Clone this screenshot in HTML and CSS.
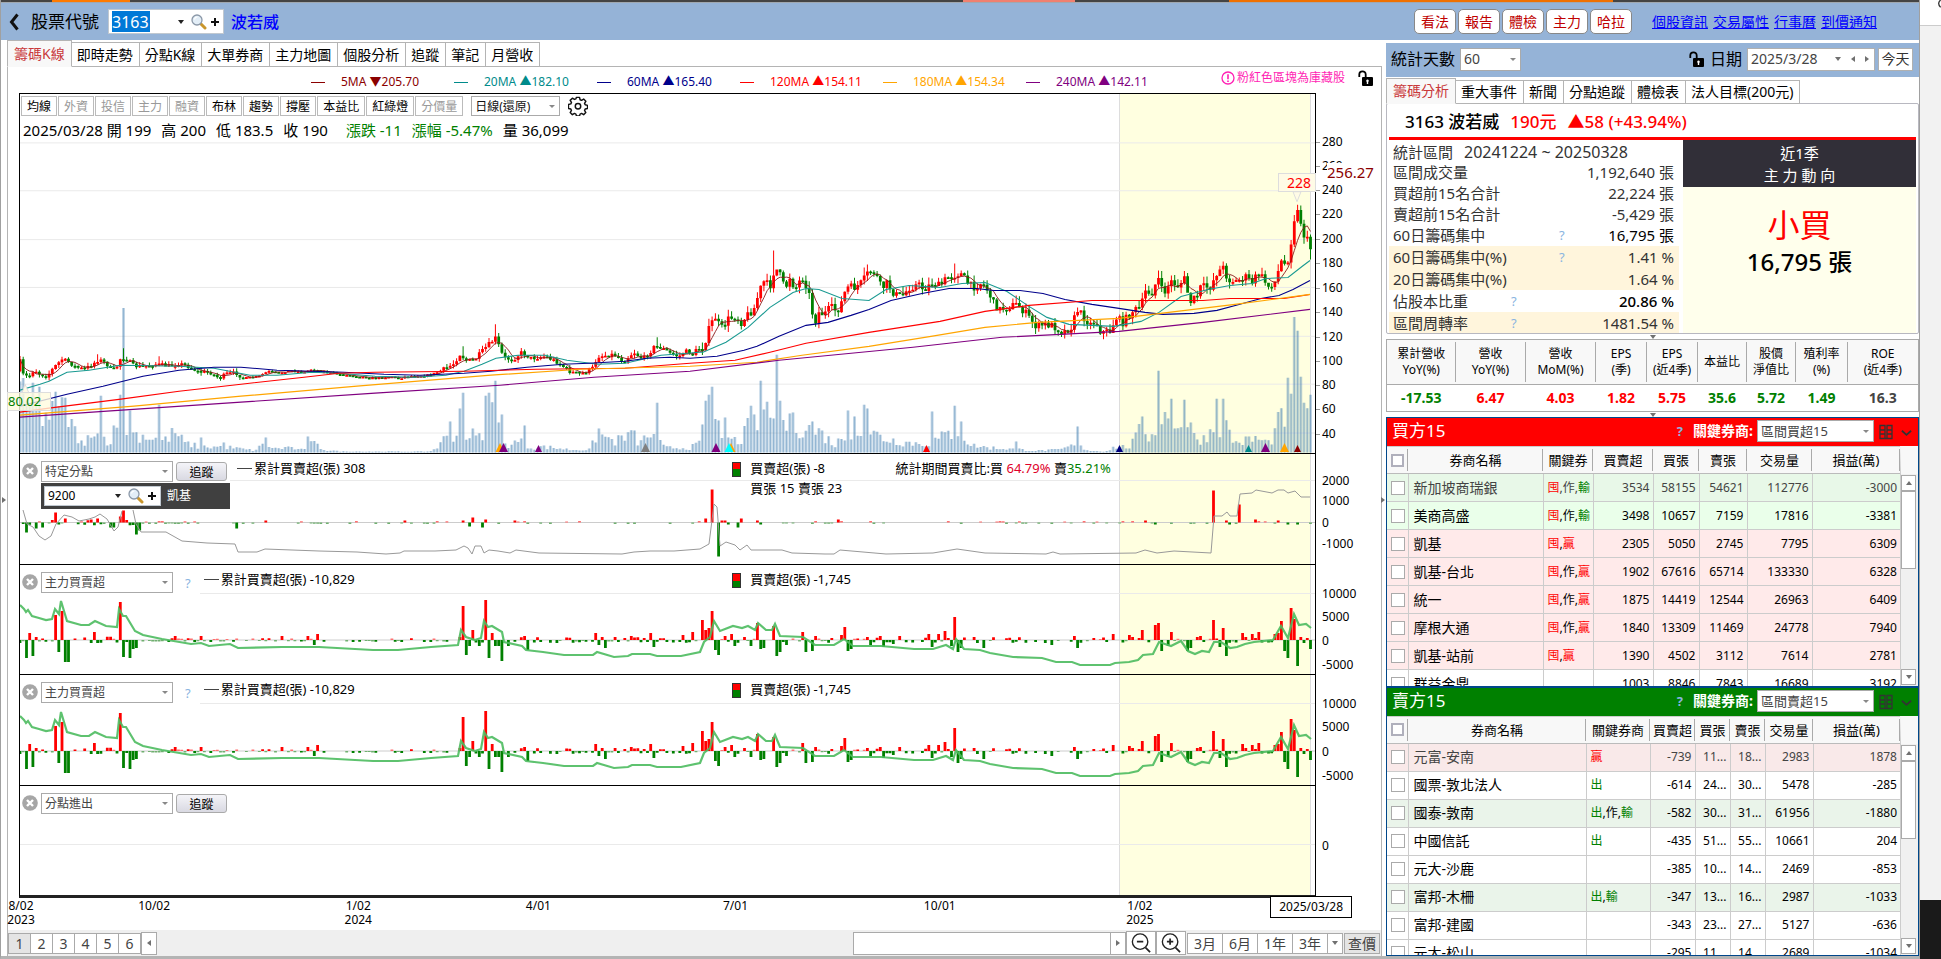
FILE: index.html
```html
<!DOCTYPE html>
<html lang="zh-Hant">
<head>
<meta charset="utf-8">
<title>籌碼K線</title>
<link rel="stylesheet" href="styles.css">
</head>
<body>
<svg class="defs" aria-hidden="true">
  <symbol id="lens" viewBox="0 0 16 16"><path d="M9.5 9.5l4.5 4.5" stroke="#c9962c" stroke-width="3" stroke-linecap="round"/><circle cx="6" cy="6" r="5" fill="#e3eef7" stroke="#8b98a8" stroke-width="1.3"/><path d="M3.5 5.5a3 3 0 0 1 3-2.5" fill="none" stroke="#fff" stroke-width="1.2"/></symbol>
  <symbol id="plus" viewBox="0 0 8 8"><path d="M4 0v8M0 4h8" stroke="#111" stroke-width="2"/></symbol>
  <symbol id="lock" viewBox="0 0 15 16"><path d="M1.3 7V4.5a3.2 3.2 0 0 1 6.4 0V8" fill="none" stroke="#000" stroke-width="1.8"/><rect x="4" y="7" width="11" height="9" rx="1"/><path d="M9.5 9.5a1.3 1.3 0 0 1 .7 2.4v2h-1.4v-2a1.3 1.3 0 0 1 .7-2.4z" fill="#fff"/></symbol>
  <symbol id="close" viewBox="0 0 16 16"><circle cx="8" cy="8" r="7.8" fill="#a6a6a6"/><path d="M5 5l6 6M11 5l-6 6" stroke="#fff" stroke-width="2.4"/></symbol>
  <symbol id="book" viewBox="0 0 14 16"><path d="M1 1.5h5v13H1zM8 1.5h5v13H8zM1 6h5M1 10h5M8 6h5M8 10h5M6 14.5h2" fill="none" stroke="#333" stroke-width="1.3"/></symbol>
  <symbol id="down" viewBox="0 0 12 8"><path d="M1 1.5l5 4.5 5-4.5" fill="none" stroke="#333" stroke-width="2"/></symbol>
  <symbol id="gear" viewBox="0 0 22 22"><path d="M9.3 1.5h3.4l.6 2.6 1.6.7 2.3-1.4 2.4 2.4-1.4 2.3.7 1.6 2.6.6v3.4l-2.6.6-.7 1.6 1.4 2.3-2.4 2.4-2.3-1.4-1.6.7-.6 2.1H9.300l-.6-2.1-1.600-.7-2.300 1.400-2.400-2.400 1.400-2.300-.7-1.600L.5 13.700V9.300l2.600-.6.7-1.600-1.400-2.300 2.400-2.400 2.300 1.400 1.600-.7z" fill="none" stroke="#111" stroke-width="1.6" stroke-linejoin="round"/><circle cx="11" cy="11.300" r="3" fill="none" stroke="#111" stroke-width="1.6"/></symbol>
  <symbol id="zoom-out" viewBox="0 0 22 22"><circle cx="10" cy="9.500" r="8.500" fill="none" stroke="#222" stroke-width="1.500"/><path d="M16 16l5 5M6.500 9.500h7" stroke="#222" stroke-width="1.900"/></symbol>
  <symbol id="zoom-in" viewBox="0 0 22 22"><circle cx="10" cy="9.500" r="8.500" fill="none" stroke="#222" stroke-width="1.500"/><path d="M16 16l5 5M6.500 9.500h7M10 6v7" stroke="#222" stroke-width="1.900"/></symbol>
</svg>

<div class="screen">
<div class="app">
  <div class="strip"><i class="strip-a"></i><i class="strip-b"></i><i class="strip-c"></i></div>
  <header class="topbar">
    <button class="back" aria-label="返回"><svg viewBox="0 0 10 18"><path d="M8.500 1.500L2.500 9l6 7.500" fill="none" stroke="#111" stroke-width="3"/></svg></button>
    <label class="code-label" for="code">股票代號</label>
    <span class="combo"><input id="code" class="code-input" value="3163"><i class="tri"></i><svg class="i16"><use href="#lens"/></svg><svg class="i8"><use href="#plus"/></svg></span>
    <strong class="stock-name">波若威</strong>
    <nav class="quick"><button>看法</button><button>報告</button><button>體檢</button><button>主力</button><button>哈拉</button></nav>
    <nav class="links"><a href="#">個股資訊</a><a href="#">交易屬性</a><a href="#">行事曆</a><a href="#">到價通知</a></nav>
  </header>

  <div class="body">
    <main class="left">
      <nav class="tabs"><button class="active">籌碼K線</button><button>即時走勢</button><button>分點K線</button><button>大單券商</button><button>主力地圖</button><button>個股分析</button><button>追蹤</button><button>筆記</button><button>月營收</button></nav>
      <div class="chart-page">
        <div class="ma-row">
          <span class="ma maroon">5MA ▼205.70</span><span class="ma teal">20MA ▲182.10</span><span class="ma navy">60MA ▲165.40</span><span class="ma red">120MA ▲154.11</span><span class="ma orange">180MA ▲154.34</span><span class="ma purple">240MA ▲142.11</span>
          <span class="treasury"><svg viewBox="0 0 14 14"><circle cx="7" cy="7" r="6" fill="none" stroke="#ff1fb4" stroke-width="1.300"/><path d="M7 3.200v5M7 9.400v1.600" stroke="#ff1fb4" stroke-width="1.600"/></svg>粉紅色區塊為庫藏股</span>
          <svg class="lock"><use href="#lock"/></svg>
        </div>
        <div class="charts">
          <section class="panel" id="price">
            <div class="plot">
              <svg class="draw" preserveAspectRatio="none"></svg>
              <div class="price-tools">
                <div class="toggles"><button>均線</button><button class="off">外資</button><button class="off">投信</button><button class="off">主力</button><button class="off">融資</button><button>布林</button><button>趨勢</button><button>撐壓</button><button>本益比</button><button>紅綠燈</button><button class="off">分價量</button>
                  <span class="select period"><select aria-label="週期"><option>日線(還原)</option></select></span>
                  <svg class="gear"><use href="#gear"/></svg></div>
                <div class="quote"><span>2025/03/28 開 199</span><span>高 200</span><span>低 183.5</span><span>收 190</span><span class="green gap">漲跌 -11</span><span class="green">漲幅 -5.47%</span><span>量 36,099</span></div>
              </div>
              <span class="callout high">228</span>
              <span class="callout low">80.02</span>
            </div>
            <div class="axis"><span class="cursor-price">256.27</span></div>
          </section>
          <section class="panel" id="broker">
            <div class="plot">
              <svg class="draw" preserveAspectRatio="none"></svg>
              <div class="tools"><svg class="x"><use href="#close"/></svg><span class="select kind"><select aria-label="指標一"><option>特定分點</option></select></span><button class="track">追蹤</button><span class="legend">累計買賣超(張) 308</span></div>
              <div class="broker-pick"><span class="combo small"><input aria-label="分點代號" value="9200"><i class="tri"></i><svg class="i16"><use href="#lens"/></svg><svg class="i8"><use href="#plus"/></svg></span>凱基</div>
              <div class="net"><div>買賣超(張) -8</div><div>買張 15 賣張 23</div></div>
              <div class="ratio">統計期間買賣比:買 <span class="crimson">64.79%</span> 賣<span class="green">35.21%</span></div>
            </div>
            <div class="axis"></div>
          </section>
          <section class="panel" id="main1">
            <div class="plot">
              <svg class="draw" preserveAspectRatio="none"></svg>
              <div class="tools"><svg class="x"><use href="#close"/></svg><span class="select kind"><select aria-label="指標二"><option>主力買賣超</option></select></span><span class="help">?</span><span class="legend">累計買賣超(張) -10,829</span></div>
              <div class="net"><div>買賣超(張) -1,745</div></div>
            </div>
            <div class="axis"></div>
          </section>
          <section class="panel" id="main2">
            <div class="plot">
              <svg class="draw" preserveAspectRatio="none"></svg>
              <div class="tools"><svg class="x"><use href="#close"/></svg><span class="select kind"><select aria-label="指標三"><option>主力買賣超</option></select></span><span class="help">?</span><span class="legend">累計買賣超(張) -10,829</span></div>
              <div class="net"><div>買賣超(張) -1,745</div></div>
            </div>
            <div class="axis"></div>
          </section>
          <section class="panel" id="flow">
            <div class="plot">
              <svg class="draw" preserveAspectRatio="none"></svg>
              <div class="tools"><svg class="x"><use href="#close"/></svg><span class="select kind"><select aria-label="指標四"><option>分點進出</option></select></span><button class="track">追蹤</button></div>
            </div>
            <div class="axis"></div>
          </section>
        </div>
        <div class="dates" id="dates"><span class="cursor-date">2025/03/28</span></div>
        <footer class="footbar">
          <div class="pages"><button class="on">1</button><button>2</button><button>3</button><button>4</button><button>5</button><button>6</button></div>
          <button class="arrow" aria-label="向左"><i class="tri west"></i></button>
          <div class="scroll"><div class="thumb"></div></div>
          <button class="arrow" aria-label="向右"><i class="tri east"></i></button>
          <button class="zoom" aria-label="縮小"><svg><use href="#zoom-out"/></svg></button>
          <button class="zoom" aria-label="放大"><svg><use href="#zoom-in"/></svg></button>
          <div class="ranges"><button>3月</button><button>6月</button><button>1年</button><button>3年</button><button class="more" aria-label="更多"><i class="tri"></i></button><button class="on">查價</button></div>
        </footer>
      </div>
    </main>

    <aside class="right">
      <div class="stat-bar">
        <label for="days">統計天數</label><span class="select days"><select id="days"><option>60</option></select></span>
        <svg class="lock"><use href="#lock"/></svg><label for="date">日期</label>
        <span class="date-box"><input id="date" value="2025/3/28"><i class="tri"></i><i class="tri west"></i><i class="tri east"></i></span><button class="today">今天</button>
      </div>
      <nav class="tabs"><button class="active">籌碼分析</button><button>重大事件</button><button>新聞</button><button>分點追蹤</button><button>體檢表</button><button>法人目標(200元)</button></nav>
      <section class="summary">
        <h1><span>3163 波若威</span><span class="red">190元</span><span class="red">▲58 (+43.94%)</span></h1>
        <div class="summary-body">
          <dl class="stats">
            <div class="period-row"><dt>統計區間</dt><dd>20241224 ~ 20250328</dd></div>
            <div><dt>區間成交量</dt><dd>1,192,640 張</dd></div>
            <div><dt>買超前15名合計</dt><dd>22,224 張</dd></div>
            <div><dt>賣超前15名合計</dt><dd>-5,429 張</dd></div>
            <div><dt>60日籌碼集中</dt><dd class="strong">16,795 張</dd><span class="help far">?</span></div>
            <div class="tint"><dt>60日籌碼集中(%)</dt><dd>1.41 %</dd><span class="help far">?</span></div>
            <div class="tint"><dt>20日籌碼集中(%)</dt><dd>1.64 %</dd></div>
            <div><dt>佔股本比重</dt><dd class="bold">20.86 %</dd><span class="help near">?</span></div>
            <div class="tint"><dt>區間周轉率</dt><dd>1481.54 %</dd><span class="help near">?</span></div>
          </dl>
          <div class="trend"><div class="trend-head">近1季<br>主 力 動 向</div><div class="verdict">小買</div><div class="amount">16,795 張</div></div>
        </div>
      </section>
      <div class="split"><i class="tri"></i></div>
      <table class="ratios">
        <colgroup><col class="w69"><col class="w70"><col class="w70"><col class="w51"><col class="w51"><col class="w49"><col class="w49"><col class="w52"><col></colgroup>
        <thead><tr><th>累計營收<br>YoY(%)</th><th>營收<br>YoY(%)</th><th>營收<br>MoM(%)</th><th>EPS<br>(季)</th><th>EPS<br>(近4季)</th><th>本益比</th><th>股價<br>淨值比</th><th>殖利率<br>(%)</th><th>ROE<br>(近4季)</th></tr></thead>
        <tbody><tr><td class="green">-17.53</td><td class="red">6.47</td><td class="red">4.03</td><td class="red">1.82</td><td class="red">5.75</td><td class="green">35.6</td><td class="green">5.72</td><td class="green">1.49</td><td>16.3</td></tr></tbody>
      </table>
      <div class="split tight"><i class="tri"></i></div>
      <section class="brokers buy">
        <div class="brokers-head"><h2>買方15</h2><span class="help">?</span><label for="key-buy">關鍵券商:</label><span class="select key"><select id="key-buy"><option>區間買超15</option></select></span><svg class="book"><use href="#book"/></svg><svg class="chev"><use href="#down"/></svg></div>
        <div class="grid">
          <table>
            <colgroup><col class="w21"><col class="w135"><col class="w50"><col class="w60"><col class="w46"><col class="w48"><col class="w65"><col></colgroup>
            <thead><tr><th><input type="checkbox" class="all" aria-label="全選買方"></th><th>券商名稱</th><th>關鍵券</th><th>買賣超</th><th>買張</th><th>賣張</th><th>交易量</th><th>損益(萬)</th></tr></thead>
            <tbody id="buy-rows"></tbody>
          </table>
          <div class="vbar"><div class="vbar-track"><i class="vb"><b class="tri north"></b></i><i class="vthumb"></i><i class="vb end"><b class="tri"></b></i></div></div>
        </div>
      </section>
      <section class="brokers sell">
        <div class="brokers-head"><h2>賣方15</h2><span class="help">?</span><label for="key-sell">關鍵券商:</label><span class="select key"><select id="key-sell"><option>區間賣超15</option></select></span><svg class="book"><use href="#book"/></svg><svg class="chev"><use href="#down"/></svg></div>
        <div class="grid">
          <table>
            <colgroup><col class="w21"><col class="w178"><col class="w64"><col class="w45"><col class="w35"><col class="w35"><col class="w48"><col></colgroup>
            <thead><tr><th><input type="checkbox" class="all" aria-label="全選賣方"></th><th>券商名稱</th><th>關鍵券商</th><th>買賣超</th><th>買張</th><th>賣張</th><th>交易量</th><th>損益(萬)</th></tr></thead>
            <tbody id="sell-rows"></tbody>
          </table>
          <div class="vbar"><div class="vbar-track"><i class="vb"><b class="tri north"></b></i><i class="vthumb"></i><i class="vb end"><b class="tri"></b></i></div></div>
        </div>
      </section>
    </aside>
  </div>
  <i class="tri east handle handle-left"></i><i class="tri east handle handle-mid"></i>
</div>
<div class="desktop"><div class="desk-top"><svg viewBox="0 0 8 12"><path d="M8 0Q2 5 8 11" fill="none" stroke="#333" stroke-width="2"/></svg></div><div class="desk-mid"></div><div class="desk-low"></div></div>
</div>
<script src="chart.js"></script>
</body>
</html>
```

FILE: styles.css
```css
* { box-sizing: border-box; }
html, body { height: 100%; }
body { margin: 0; overflow: hidden; background: #c8c8c8; color: #000; font-family: "Noto Sans", "Noto Sans CJK TC", sans-serif; font-size: 14px; line-height: 20px; }
button, input, select { font: inherit; color: inherit; margin: 0; padding: 0; border: 0; border-radius: 0; background: none; }
i, b { font-style: normal; font-weight: normal; }
.defs { position: absolute; width: 0; height: 0; }
.red { color: #f00; } .green { color: #008000; } .crimson { color: #e0002a; }
.maroon { color: #8b0000; } .teal { color: #008b8b; } .navy { color: #00008b; } .orange { color: #ffa500; } .purple { color: #800080; }

.tri { display: block; flex: none; width: 0; height: 0; border: 3px solid transparent; border-top: 4px solid #707070; border-bottom: 0; }
.tri.west { border: 3px solid transparent; border-right: 4px solid #707070; border-left: 0; }
.tri.east { border: 3px solid transparent; border-left: 4px solid #707070; border-right: 0; }
.tri.north { border: 3px solid transparent; border-bottom: 4px solid #707070; border-top: 0; }
.i16 { width: 16px; height: 16px; } .i8 { width: 8px; height: 8px; }

.screen { display: flex; height: 100vh; }
.app { position: relative; flex: 1; min-width: 0; display: flex; flex-direction: column; background: #fff; border-left: 1px solid #a0a0a0; border-right: 1px solid #a0a0a0; border-bottom: 3px solid #b4b4b4; }
.strip { display: grid; grid-template-columns: 51px 78px 833px 112px 154px 384px 1fr; height: 3px; background: #444; border-bottom: 1px solid #a0a8b0; }
.strip-a { grid-column: 2; background: #ff7a00; } .strip-b { grid-column: 4; background: #f08070; } .strip-c { grid-column: 6; background: #f07000; }
.desktop { width: 21px; display: flex; flex-direction: column; }
.desk-top { height: 26px; background: #fff; border-bottom: 1px solid #ccc; text-align: right; line-height: 0; }
.desk-top svg { width: 6px; height: 8px; }
.desk-mid { flex: 1; background: #f2f2f2; }
.desk-low { height: 59px; background: #1a1a1a; }

.topbar { display: flex; align-items: center; height: 37px; padding: 0 42px 0 8px; background: #95b3d7; }
.back { width: 16px; height: 20px; } .back svg { width: 10px; height: 18px; display: block; }
.code-label { margin-left: 6px; font-size: 17px; }
.combo { display: flex; align-items: center; gap: 7px; width: 116px; height: 25px; margin-left: 9px; padding: 0 4px 0 3px; background: #fff; border: 1px solid #c0c8d0; }
.combo .tri { border-top-color: #222; margin-left: auto; }
.code-input { width: 38px; height: 21px; font-size: 16px; background: #0078d7; color: #fff; }
.combo .i16 + .i8 { margin-left: -3px; }
.stock-name { margin-left: 7px; font-size: 16px; font-weight: 500; color: #00f; }
.quick { display: flex; gap: 2px; margin-left: auto; }
.quick button { width: 42px; height: 25px; border: 1px solid #888; border-radius: 5px; background: #fff; color: #c00000; font-size: 14px; }
.links { display: flex; gap: 5px; margin-left: 20px; } .links a { color: #00f; }

.body { flex: 1; min-height: 0; display: grid; grid-template-columns: minmax(0, 1fr) 533px; gap: 4px; padding-left: 6px; }
.left { display: flex; flex-direction: column; min-width: 0; min-height: 0; }
.tabs { display: flex; align-items: flex-end; height: 27px; flex: none; position: relative; z-index: 1; margin-bottom: -1px; }
.tabs button { height: 25px; padding: 0 6px 0 5px; border: 1px solid #b4b4b4; border-left-width: 0; background: #fff; white-space: nowrap; }
.tabs .active { height: 27px; padding: 0 6px; border-left-width: 1px; border-bottom-color: #f8f8f8; background: #f8f8f8; color: #c9393b; }
.chart-page { flex: 1; min-height: 0; display: flex; flex-direction: column; border: 1px solid #b4b4b4; border-bottom: 0; }

.ma-row { position: relative; display: flex; align-items: center; height: 26px; padding-left: 303px; font-size: 12px; }
.ma { display: flex; align-items: center; width: 143px; margin-top: 4px; white-space: nowrap; }
.ma::before { content: ""; width: 14px; height: 1px; margin-right: 16px; background: currentColor; }
.treasury { display: flex; align-items: center; gap: 2px; margin: 0 13px 4px auto; color: #ff1fb4; white-space: nowrap; }
.treasury svg { width: 14px; height: 14px; }
.lock { width: 15px; height: 16px; flex: none; } .ma-row .lock { margin: 0 8px 4px 0; }

.charts { flex: 1; min-height: 0; margin-left: 11px; display: grid; grid-template-rows: 361fr 111fr 110fr 111fr 112fr; }
.panel { display: grid; grid-template-columns: minmax(0, 1fr) 65px; min-height: 0; }
.plot { position: relative; border: 1px solid #000; border-top: 0; min-height: 0; }
#price .plot { border-top: 1px solid #000; } #flow .plot { border-bottom: 3px solid #222; }
.draw { position: absolute; inset: 0; width: 100%; height: 100%; }
.axis { position: relative; font-size: 12px; line-height: 16px; }
.tick { position: absolute; left: 6px; transform: translateY(-50%); }
#price .tick::before { content: ""; position: absolute; left: -6px; top: 8px; width: 4px; height: 1px; background: #999; }
.cursor-price { position: absolute; z-index: 1; left: 11px; top: 22%; transform: translateY(-50%); line-height: 18px; background: #fff; color: #8b0000; font-size: 15px; }
.price-tools { position: absolute; left: 1px; top: 2px; }
.toggles { display: flex; gap: 1px; font-size: 12px; }
.toggles button { height: 20px; padding: 0 5px; border: 1px solid #bbb; background: #fff; white-space: nowrap; }
.toggles .off { color: #999; }
.select { position: relative; display: flex; background: #fff; border: 1px solid #aaa; color: #444; }
.select select { width: 100%; height: 100%; padding: 0 2px 0 3px; appearance: none; }
.select::after { content: ""; position: absolute; right: 4px; top: 45%; border: 3px solid transparent; border-top: 3px solid #888; border-bottom: 0; pointer-events: none; }
.period { width: 89px; height: 20px; margin-left: 7px; color: #111; }
.gear { width: 20px; height: 20px; margin-left: 7px; }
.quote { display: flex; gap: 10px; margin: 4px 0 0 2px; font-size: 15px; white-space: nowrap; } .quote .gap { margin-left: 8px; }
.callout { position: absolute; height: 19px; line-height: 17px; padding: 0 4px; border: 1px solid #ddd; background: #fffbe6; font-size: 14px; }
.high { right: -1px; top: 22%; width: 38px; text-align: right; color: #f00; }
.low { left: -13px; top: 83%; width: 44px; padding: 0; background: rgba(255, 251, 222, .8); color: #008000; font-size: 13px; }

.tools { position: absolute; left: 2px; top: 7px; right: 0; display: flex; align-items: center; height: 20px; font-size: 12px; }
.x { width: 16px; height: 16px; margin-right: 3px; }
.kind { width: 132px; height: 21px; }
.track { width: 51px; height: 19px; margin-left: 3px; border: 1px solid #aaa; border-radius: 3px; background: linear-gradient(#f4f4f8, #d9d9e2); }
.help { color: #8ab4e0; font-size: 13px; }
.brokers .help { font-weight: bold; }
.tools .help { margin: 2px 4px 0 12px; }
.legend { display: flex; align-items: center; height: 20px; margin: -6px 0 0 10px; }
.tools .help + .legend { margin-left: 9px; }
.legend::before { content: ""; width: 15px; height: 1px; background: #444; margin-right: 2px; }
.legend, .net, .ratio { font-size: 13px; white-space: nowrap; }
.broker-pick { position: absolute; left: 21px; top: 29px; width: 189px; height: 26px; padding: 3px; display: flex; align-items: center; gap: 6px; background: #404040; color: #fff; font-size: 12px; }
.combo.small { width: 117px; height: 20px; margin: 0; color: #000; } .small input { width: 44px; }
.net { position: absolute; left: 55%; top: 4px; padding-left: 18px; }
.net::before { content: ""; position: absolute; left: 0; top: 4px; width: 7px; height: 13px; border: 1px solid #333; background: linear-gradient(#f00 50%, #008000 50%); }
.ratio { position: absolute; left: 68%; top: 4px; margin-left: -5px; }

.dates { position: relative; flex: none; height: 32px; margin: 0 65px 0 12px; font-size: 12px; line-height: 14px; text-align: center; }
.date { position: absolute; top: 1px; transform: translateX(-50%); white-space: pre-line; }
.cursor-date { position: absolute; right: -36px; top: -2px; padding: 3px 8px; border: 1px solid #000; background: #fff; z-index: 2; }
.footbar { display: flex; align-items: center; flex: none; height: 26px; background: #efefef; color: #444; }
.footbar button { border: 1px solid #aaa; background: #fff; }
.footbar .on { background: #e4e4e4; }
.pages, .ranges { display: flex; } .pages button { width: 23px; height: 21px; margin-right: -1px; }
.footbar .arrow { width: 16px; height: 23px; margin-left: 1px; display: flex; align-items: center; justify-content: center; }
.scroll { flex: 1; display: flex; justify-content: flex-end; } .thumb { width: 27%; height: 23px; border: 1px solid #aaa; background: #fff; }
.scroll + .arrow { margin-left: -1px; }
.footbar .zoom { width: 30px; height: 24px; padding: 0; margin-left: 0; } .zoom svg { width: 22px; height: 20px; display: block; margin: auto; }
.ranges { margin: 0 2px 0 1px; } .ranges button { width: 36px; height: 21px; margin-right: -1px; white-space: nowrap; }
.ranges .more { width: 16px; display: grid; place-items: center; margin-right: 1px; }

.right { display: flex; flex-direction: column; min-height: 0; padding-top: 3px; }
.stat-bar { display: flex; align-items: center; height: 34px; flex: none; padding: 0 6px 2px 5px; background: #95b3d7; font-size: 16px; }
.days { width: 61px; height: 23px; margin-left: 5px; font-size: 14px; } .days select { padding-left: 3px; }
.stat-bar .lock { margin: 0 6px 0 auto; }
.date-box { display: flex; align-items: center; gap: 10px; width: 128px; height: 23px; margin: 0 3px 0 5px; padding: 0 5px 0 3px; background: #fff; border: 1px solid #b0b0b0; color: #444; font-size: 14px; }
.date-box input { flex: 1; min-width: 0; }
.today { width: 35px; height: 23px; border: 1px solid #b0b0b0; background: #fff; color: #333; font-size: 14px; }
.right .tabs { height: 27px; } .right .tabs .active { height: 26px; } .right .tabs button { height: 24px; }
.summary { flex: none; height: 231px; padding: 1px 2px 2px; border: 1px solid #b8b8c0; border-radius: 2px; overflow: hidden; background: #fff; }
.summary h1 { display: flex; gap: 11px; margin: 0; height: 35px; padding: 5px 16px 0; border-bottom: 3px solid #f00; font-size: 17px; font-weight: 500; line-height: 24px; }
.summary-body { display: grid; grid-template-columns: 294px 1fr; }
.stats { margin: 0; padding-right: 4px; font-size: 15px; color: #333; }
.stats div { position: relative; display: flex; justify-content: space-between; height: 22px; line-height: 22px; padding: 0 5px 0 4px; white-space: nowrap; }
.stats div:nth-child(-n+4) { height: 21px; }
.stats .period-row { height: 22px; line-height: 24px; justify-content: flex-start; gap: 11px; }
.period-row dd { font-size: 16px; }
.stats dd { margin: 0; } .stats .tint { background: #fff5dc; } .stats .strong { color: #000; } .stats .bold { color: #000; font-weight: 500; }
.stats .help { position: absolute; } .far { left: 170px; } .near { left: 122px; }
.trend { min-height: 200px; background: #ffffec; text-align: center; }
.trend-head { height: 47px; padding-top: 2px; background: #312f38; color: #fff; font-size: 15px; line-height: 22px; }
.verdict { margin-top: 18px; color: #f00; font-size: 32px; line-height: 40px; } .amount { font-size: 24px; font-weight: 500; line-height: 34px; }
.split { display: flex; justify-content: center; flex: none; height: 5px; padding-top: 1px; }
table { border-collapse: collapse; table-layout: fixed; width: 100%; }
th { font-weight: normal; padding: 0; } td { padding: 0; }
.w21 { width: 21px; } .w35 { width: 35px; } .w45 { width: 45px; } .w46 { width: 46px; } .w48 { width: 48px; } .w49 { width: 49px; } .w50 { width: 50px; } .w51 { width: 51px; } .w52 { width: 52px; } .w60 { width: 60px; } .w64 { width: 64px; } .w65 { width: 65px; } .w69 { width: 69px; } .w70 { width: 70px; } .w135 { width: 135px; } .w178 { width: 178px; }
.ratios { flex: none; border: 1px solid #aaa; font-size: 12px; }
.ratios th { height: 45px; line-height: 16px; background: linear-gradient(#aaa, #aaa) right center / 1px 40px no-repeat #f8f8f8; border-bottom: 1px solid #aaa; }
.ratios th:last-child { background: #f8f8f8; }
.ratios td { height: 27px; text-align: center; font-size: 14px; font-weight: bold; } .ratios td:last-child { color: #444; }

.brokers { flex: 1; min-height: 0; display: flex; flex-direction: column; border: 1px solid #00478a; overflow: hidden; }
.brokers-head { display: flex; align-items: center; height: 28px; flex: none; padding: 0 6px 2px 5px; color: #fff; }
.buy .brokers-head { background: #f00; } .sell .brokers-head { background: #008000; }
.brokers h2 { margin: 0 auto 0 0; font-size: 17px; font-weight: normal; }
.brokers-head label { margin: 0 4px 0 10px; font-size: 14px; font-weight: bold; }
.key { width: 117px; height: 22px; font-size: 13px; }
.book { width: 14px; height: 16px; margin: 2px 8px 0 5px; } .chev { width: 11px; height: 8px; margin-top: 4px; }
.grid { flex: 1; min-height: 0; display: grid; grid-template: minmax(0, 1fr) / minmax(0, 1fr) 18px; align-items: start; overflow: hidden; }
.brokers th { height: 27px; font-size: 13px; background: linear-gradient(#aaa, #aaa) right center / 1px 22px no-repeat #f8f8f8; border-bottom: 1px solid #bbb; border-top: 1px solid #ccc; white-space: nowrap; }
.brokers td { height: 28px; padding: 0 3px; border: 1px solid #ccc; border-width: 0 1px 1px 0; text-align: right; font-size: 12px; white-space: nowrap; }
.brokers td:first-child { padding: 0; text-align: center; }
.brokers td:nth-child(2) { padding-left: 5px; text-align: left; font-size: 14px; } .brokers td:nth-child(3) { padding-left: 4px; text-align: left; }
.brokers td:last-child { border-right: 0; }
.brokers input { display: block; appearance: none; width: 14px; height: 14px; margin: 0 0 0 4px; border: 1px solid #aaa; background: #fff; }
.brokers .all { width: 13px; height: 13px; border: 2px solid #b0b0bc; outline: 0; }
.win td { background: #ffeaea; } .lose td { background: #eaffea; } .soft td { background: #eaf4ea; }
.lose.hover td { background: #e8f8e8; color: #444; } .win.hover td { background: #f9e9e9; color: #444; }
.vbar { height: 100%; border-left: 1px solid #ccc; border-top: 28px solid #f8f8f8; background: #f0f0f0; min-height: 0; }
.vbar-track { display: flex; flex-direction: column; height: 100%; padding: 1px 2px 1px 0; }
.vb { display: grid; place-items: center; flex: none; height: 16px; border: 1px solid #aaa; background: #fff; } .vb.end { margin-top: auto; }
.vthumb { height: 78px; border: 1px solid #aaa; background: #fff; }
.handle { position: absolute; top: 52%; } .handle-left { left: 1px; } .handle-mid { right: 534px; }
```

FILE: chart.js
```js
// Plot coordinates: x 20..1315 runs over the trading days, y runs down the five stacked panels.
const X0 = 20, X1 = 1315, DAYS = 400, FIRST = 20, LAST = 1310.5;
const step = (LAST - FIRST) / (DAYS - 1);
const parse = s => s.trim().split(/\s+/).map(p => p.split(',').map(Number));
let seed = 7;
const rnd = () => (seed = (seed * 16807) % 2147483647) / 2147483647;
function at(pts, x) {
  if (x <= pts[0][0]) return pts[0][1];
  for (let i = 1; i < pts.length; i++) if (x <= pts[i][0]) {
    const [a, b] = pts[i - 1], [c, d] = pts[i];
    return b + (d - b) * (x - a) / (c - a || 1);
  }
  return pts[pts.length - 1][1];
}
const line = (pts, color, w = 1, extra = '') => `<polyline points="${pts.map(p => p.join()).join(' ')}" fill="none" stroke="${color}" stroke-width="${w}" ${extra}/>`;
const path = (d, color, extra = '') => `<path d="${d}" fill="${color}" ${extra}/>`;
const box = (x, y, w, h) => `M${x.toFixed(1)} ${y.toFixed(1)}h${w}v${h.toFixed(1)}h${-w}z`;

function panel(id, top, height, ticks, body, gridFrom = X0) {
  const el = document.getElementById(id), svg = el.querySelector('.draw');
  svg.setAttribute('viewBox', `${X0} ${top} ${X1 - X0} ${height}`);
  let s = `<rect x="1119.5" y="${top}" width="191" height="${height}" fill="#ffffe0"/><path d="M1119.5 ${top}v${height}M1310.5 ${top}v${height}" stroke="#ddd" fill="none"/>`;
  for (const [y, label, grid] of ticks) {
    if (grid) s += `<path d="M${grid === 2 ? gridFrom : X0} ${y}H${X1}" stroke="${label === '0' && id !== 'flow' ? '#ccc' : '#eaeaea'}" fill="none"/>`;
    if (label) el.querySelector('.axis').insertAdjacentHTML('beforeend', `<span class="tick" style="top:${((y - top) / height * 100).toFixed(2)}%">${label}</span>`);
  }
  svg.innerHTML = s + body;
}

const trend = parse(`20,362 22,375 29,378 34,370 40,375 47,377 54,368 62,360 69,363 76,368 85,370 92,365 99,360 107,365 112,372 117,367 121,358 127,360 134,367 143,367 156,365 170,367 179,364 188,367 199,373 210,373 219,379 228,374 237,374 243,379 259,377 268,372 279,374 290,371 304,373 312,370 321,372 339,375 357,377 375,379 393,377 397,380 406,377 429,376 442,371 453,365 460,355 467,362 475,360 484,350 491,343 496,338 500,350 504,359 513,360 522,353 531,359 545,357 558,363 569,372 580,375 592,370 598,357 614,355 623,362 634,353 643,360 654,348 661,348 670,354 679,357 688,351 692,356 697,350 703,348 710,327 715,317 721,330 728,320 735,317 741,323 748,315 755,308 759,292 764,282 770,287 775,268 779,273 785,290 790,277 795,290 802,277 807,287 811,303 814,325 819,313 824,315 831,308 837,312 843,300 846,288 855,288 862,283 869,272 875,273 882,290 886,283 895,295 902,297 909,288 918,285 924,290 933,283 940,287 947,278 956,275 960,273 967,283 973,288 982,283 989,293 994,305 1000,310 1009,307 1017,305 1025,313 1036,327 1047,325 1054,327 1063,333 1072,327 1077,310 1083,317 1090,325 1096,322 1101,333 1110,332 1116,318 1123,323 1132,312 1141,308 1145,292 1152,293 1158,278 1163,295 1171,282 1179,287 1184,278 1190,303 1197,297 1201,287 1210,288 1217,273 1223,268 1228,280 1237,282 1245,277 1252,283 1259,273 1268,287 1275,282 1282,260 1286,267 1290,250 1294,220 1297,211 1300,218 1303,234 1307,240 1311,250`);
const peaks = { 122: 349, 158: 357, 99: 355, 464: 347, 496: 325, 656: 338, 775: 251, 864: 268, 869: 266, 956: 264, 1016: 296, 1158: 271, 1223: 262, 1297: 205 };
const closes = [];
let prev = 372, ups = '', downs = '';
for (let i = 0; i < DAYS; i++) {
  const x = FIRST + i * step, base = at(trend, x);
  const amp = x < 240 ? 4 : x < 440 ? 1.5 : x < 700 ? 4.5 : 8;
  const c = base + (rnd() - .5) * amp;
  let hi = Math.min(prev, c) - rnd() * amp * .9, lo = Math.max(prev, c) + rnd() * amp * .8;
  for (const k in peaks) if (Math.abs(k - x) < step / 2) hi = Math.min(hi, peaks[k]);
  if (i === DAYS - 1) lo = 260;
  const d = box(x - 1.4, Math.min(prev, c), 2.8, Math.max(1.8, Math.abs(prev - c))) + box(x - .5, hi, 1, lo - hi);
  if (c < prev) ups += d; else downs += d;
  prev = c; closes.push(c);
}
const ma5 = closes.map((_, i) => { const w = closes.slice(Math.max(0, i - 4), i + 1); return [FIRST + i * step, w.reduce((a, b) => a + b) / w.length]; });

const volBase = parse(`20,60 35,40 50,40 65,45 75,22 85,5 92,32 97,20 110,12 115,25 125,30 133,20 145,18 155,15 165,13 175,22 185,10 200,6 215,6 225,6 240,4 255,2 265,10 275,4 290,6 300,2 312,10 325,3 340,1 430,1 440,8 450,25 458,15 470,20 480,15 490,50 500,25 505,8 520,12 530,5 540,6 555,5 570,3 590,3 597,20 615,12 630,18 640,10 650,20 665,5 690,5 700,10 712,30 725,15 740,12 750,30 770,40 785,30 800,28 820,22 835,8 850,25 870,22 885,15 900,12 915,10 930,10 945,18 960,25 970,8 990,5 1010,4 1040,2 1060,3 1075,8 1090,2 1105,1 1115,6 1130,6 1143,28 1150,15 1160,40 1175,35 1185,30 1195,15 1205,15 1215,30 1225,30 1235,10 1255,15 1270,10 1280,35 1290,45 1310,40`);
const volSpikes = parse(`33,70 39,66 55,61 64,55 100,57 119,58 122.5,145 130,42 158,48 200,15 223,10 265,15 309,16 451,31 461,44 464,60 485,57 489,60 496.5,72 503,38 525,27 600,24 636,22 656,50 703,28 707,52 709,58 713,66 717,32 726,35 751,47 761,72 765,43 778,98 781,52 793,40 813,31 848,42 855,36 864,48 868,44 932,41 956,47 962,31 1016,11 1077,26 1158,82 1142,36 1171,54 1184,53 1190,30 1216,54 1223,54 1288,75 1294.5,136 1297.5,122 1300.5,76 1304,50 1310.5,58`);
function bySpike(list) {
  const m = new Map();
  for (const [x, v] of list) {
    let i = Math.max(0, Math.min(DAYS - 1, Math.round((x - FIRST) / step)));
    if (m.has(i) && i < DAYS - 1) i++;
    m.set(i, v);
  }
  return m;
}
const vs = bySpike(volSpikes);
let wide = '', core = '';
for (let i = 0; i < DAYS; i++) {
  const x = FIRST + i * step, h = vs.get(i) || Math.max(.8, at(volBase, x) * (.5 + rnd() * .85));
  wide += box(x - 1.5, 453.5 - h, 3, h); core += box(x - .6, 453.5 - h, 1.2, h);
}
const ma20 = parse(`20,391 40,385 49,382 67,373 89,371 120,366 179,367 214,369 250,376 277,376 312,373 339,374 375,377 415,378 446,376 464,372 482,365 496,359 518,356 545,356 567,361 598,365 625,364 643,360 661,356 700,353 703,353 726,343 748,328 770,308 793,293 806,289 819,290 842,299 869,301 886,290 909,286 940,288 962,284 985,283 1007,292 1029,307 1047,318 1069,325 1114,327 1141,322 1159,313 1181,297 1208,290 1230,286 1252,284 1266,279 1288,278 1302,267 1310,261`);
const ma60 = parse(`20,407 67,395 103,387 143,377 179,371 214,368 241,368 277,371 312,372 344,373 384,375 420,376 464,374 491,372 527,368 563,365 589,364 625,362 647,359 670,358 690,359 717,357 744,351 757,347 779,337 806,326 828,323 851,316 869,310 891,301 922,294 949,289 976,289 994,291 1020,291 1043,294 1065,300 1092,305 1119,309 1145,313 1163,315 1194,314 1217,311 1239,305 1261,299 1279,296 1293,290 1310,281`);
const ma120 = parse(`20,413 49,409 121,400 179,392 241,385 304,378 339,374 375,373 464,372 536,370 625,369 690,364 735,361 770,353 806,344 869,333 940,322 985,312 1029,306 1092,301 1203,301 1230,299 1284,299 1310,295`);
const ma180 = parse(`20,416 134,407 241,397 357,387 491,376 580,370 690,367 757,363 802,356 869,347 931,337 985,328 1038,323 1119,319 1177,312 1235,305 1310,295`);
const ma240 = parse(`20,418 107,412 241,403 375,394 500,386 594,378 690,372 779,361 913,348 1002,338 1119,332 1203,323 1310,310`);
const marks = [[500, 'orange', 9], [503.5, 'purple', 9], [538.5, 'purple', 7], [645.5, 'gray', 9], [716, 'purple', 9], [731, 'orange', 9], [729, 'cyan', 9], [926.5, 'red', 7], [1119.5, 'navy', 7], [1248.5, 'darkcyan', 7], [1265.5, 'purple', 9], [1284.5, 'orange', 9], [1297.5, 'darkred', 7]];
const priceTicks = [];
for (let v = 280; v >= 40; v -= 20) priceTicks.push([Math.round(482 - v * 1.2125), String(v), v % 40 === 0 ? 1 : 0]);
panel('price', 94, 360, priceTicks,
  path(wide, 'steelblue', 'fill-opacity=".3"') + path(core, 'steelblue', 'fill-opacity=".4"') +
  path(downs, 'green') + path(ups, 'red') +
  line(ma5, '#8b1a1a', .9) + line(ma20, '#1a9a92', 1.1) + line(ma60, '#00008b', 1.1) + line(ma120, 'red', 1.1) + line(ma180, 'orange', 1.2) + line(ma240, 'purple', 1.1) +
  marks.map(([x, c, h]) => `<path d="M${x} ${453 - h}l${h / 2} ${h}h${-h}z" fill="${c}"/>`).join('') +
  '<path d="M1293 192l4 10 4-10z" fill="#fffbe6" stroke="#ddd"/><path d="M22 394l3-9 4 9z" fill="#fffbe6" stroke="#ddd"/>');

function bars(zero, list, limit, density) {
  const m = bySpike(list); let r = '', g = '', rs = '', gs = '';
  for (let i = 0; i < DAYS; i++) {
    const x = FIRST + i * step;
    if (m.has(i)) { const v = m.get(i); if (v > 0) r += box(x - 1.4, zero - v, 2.8, v); else g += box(x - 1.4, zero, 2.8, -v); continue; }
    if (rnd() > density(x)) continue;
    const h = 1 + rnd() * limit(x);
    if (rnd() < .35) { const d = box(x - 1.4, zero - h, 2.8, h); h > 1.6 ? r += d : rs += d; }
    else { const d = box(x - 1.4, zero, 2.8, h); h > 1.6 ? g += d : gs += d; }
  }
  return path(r, 'red') + path(g, 'green') + path(rs, '#ff7070') + path(gs, '#70b070');
}
const brokerBars = parse(`54,10 25,-10 36,-6 42,-5 64,4 91,3 99,4 111,-5 113,-5 119,6 122.5,12 135,-12 139,-8 238,-6 265,2 404,2 463,2 471,-4 474,5 484,-5 487,3 516,2 706,4 713.5,33 719,-34 722,2 726,2 729,-2 739,-5 742,4 758,2 761,-2 839,3 1145,2 1155,-2 1213.5,32 1226,2 1230,-2 1239.5,18 1255,3 1277,2 1288,-2 1297,-2`);
const brokerLine = parse(`23,511 27,525 33,528 39,537 45,541 51,537 56,525 64,516 72,518 79,522 89,520 95,518 100,515 107,520 114,532 118,528 122,512`);
const brokerLine2 = parse(`133,511 136,525 141,533 166,533 182,542 207,544 235,545 238,553 257,553 265,550 319,552 357,553 386,555 400,554 404,552 435,552 456,551 464,547 468,549 472,555 475,547 481,547 484,554 489,551 498,552 510,554 516,551 539,554 622,555 634,553 650,552 674,552 700,550 709,545 714,505 717,508 720,547 726,543 735,546 740,551 747,546 751,551 782,551 792,554 825,555 834,555 840,551 886,555 933,554 957,550 985,554 1046,555 1053,553 1060,555 1136,554 1145,551 1157,554 1174,552 1211,554 1214,517 1222,517 1227,513 1230,517 1237,517 1240,495 1252,494 1256,491 1272,494 1278,491 1284,491 1288,494 1295,492 1301,498 1310,498`);
panel('broker', 455, 110, [[481.5, '2000', 2], [502, '1000', 0], [523.5, '0', 1], [544, '-1000', 0]],
  bars(523.5, brokerBars, x => x < 140 ? 2 : .6, x => x < 190 ? .8 : .25) + line(brokerLine, '#999') + line(brokerLine2, '#999'), 230);

const mainBars = parse(`25,-18 28,7 32,-16 36,3 54,25 58,-12 61.5,29 64,-22 67,-22 93,8 120,38 122.5,-17 129.5,-18 133,-9 136,-8 174,4 200,4 283,4 309,4 313,-5 316,6 461.5,34 464,-15 471,-6 474,10 478,-6 484.5,40 487.5,-18 491,7 494,-6 497,-6 503.5,-21 507,-6 523,4 526,-10 596,7 600,-5 603,3 606,-8 616,3 631,4 651,7 655,-7 684,5 693,8 703,20 707,10 710,12 713.5,29 716,-10 719,-15 725,4 732,6 735,-6 746,3 751,-6 758.5,17 762,-9 765,-8 774.5,14 777,-16 780,-12 787,-5 803,8 807,-12 814,-11 817,4 840,5 845.5,13 848,-11 851,-9 868,3 870,-5 881,4 885,-7 893,-4 901,4 929,6 932,-7 939,6 945.5,9 952,-6 955.5,23 958.5,-12 961,-8 985,-8 1052,-5 1074.5,4 1077.5,-8 1113,6 1129,5 1142.5,10 1155.5,15 1158.5,17 1161,-11 1168,-6 1171.5,8 1187,-11 1190,-8 1198,3 1201,4 1213.5,20 1220,-7 1223.5,12 1226,-16 1242,7 1252,6 1258.5,8 1274,6 1277,7 1281.5,19 1284,-11 1287.5,-18 1290.5,32 1294.5,21 1297.5,-26 1301,3 1304,-3 1310.5,-9`);
const mainLine = parse(`20,606 24,610 26,613 28,611 32,617 39,619 46,621 52,620 55,610 59,615 61,602 67,622 81,626 89,626 95,622 106,627 117,628 119,610 123,617 126,617 135,632 143,636 162,640 191,645 201,644 209,647 230,645 238,649 282,648 319,648 373,651 398,651 431,648 458,646 461,631 466,638 475,641 481,639 484,622 488,628 492,627 502,633 504,643 522,647 526,651 543,653 564,656 593,656 597,653 614,658 628,657 632,655 650,655 657,657 681,657 700,653 704,643 710,638 714,622 720,632 733,627 742,629 748,627 755,631 758,624 766,631 772,631 775,625 780,637 803,638 815,646 834,646 844,640 853,647 881,647 914,650 933,650 946,646 953,650 956,640 964,650 980,651 990,654 1013,658 1042,659 1056,663 1072,663 1080,666 1110,666 1115,664 1129,663 1138,661 1143,656 1153,655 1159,643 1171,647 1181,642 1188,652 1195,655 1202,652 1209,653 1214,643 1221,643 1230,649 1237,648 1245,645 1254,643 1273,641 1281,627 1288,639 1294,615 1299,626 1306,625 1311,629`);
const mainBody = bars(641, mainBars, x => x < 140 ? 3 : x < 450 ? .9 : 2, () => .65) + line(mainLine, '#4dbb5f', 2.2, 'stroke-opacity=".9"');
panel('main1', 566, 109, [[594.5, '10000', 2], [618, '5000', 0], [641, '0', 1], [665, '-5000', 0]], mainBody, 200);
panel('main2', 676, 110, [[704.5, '10000', 2], [728, '5000', 0], [752, '0', 1], [776, '-5000', 0]], `<g transform="translate(0 111)">${mainBody}</g>`, 200);
panel('flow', 787, 109, [[845.5, '0', 1]], '');

for (const [x, t] of [[21, '8/02\n2023'], [154, '10/02'], [358, '1/02\n2024'], [538, '4/01'], [735, '7/01'], [939, '10/01'], [1139, '1/02\n2025']])
  document.getElementById('dates').insertAdjacentHTML('beforeend', `<span class="date" style="left:${((x - X0) / (X1 - X0) * 100).toFixed(2)}%">${t}</span>`);

const tag = { 囤: 'red', 贏: 'red', 輸: 'green', 出: 'green' };
const tags = s => s ? s.split('').map(c => tag[c] ? `<span class="${tag[c]}">${c}</span>` : c).join(',') : '';
function rows(id, data) {
  document.getElementById(id).innerHTML = data.map(([cls, name, keys, ...n]) =>
    `<tr class="${cls}"><td><input type="checkbox" aria-label="${name}"></td><td>${name}</td><td>${tags(keys)}</td>${n.map(v => `<td>${v}</td>`).join('')}</tr>`).join('');
}
rows('buy-rows', [
  ['lose hover', '新加坡商瑞銀', '囤作輸', 3534, 58155, 54621, 112776, -3000],
  ['lose', '美商高盛', '囤作輸', 3498, 10657, 7159, 17816, -3381],
  ['win', '凱基', '囤贏', 2305, 5050, 2745, 7795, 6309],
  ['win', '凱基-台北', '囤作贏', 1902, 67616, 65714, 133330, 6328],
  ['win', '統一', '囤作贏', 1875, 14419, 12544, 26963, 6409],
  ['win', '摩根大通', '囤作贏', 1840, 13309, 11469, 24778, 7940],
  ['win', '凱基-站前', '囤贏', 1390, 4502, 3112, 7614, 2781],
  ['', '群益金鼎', '', 1003, 8846, 7843, 16689, 3192]]);
rows('sell-rows', [
  ['win hover', '元富-安南', '贏', -739, '11...', '18...', 2983, 1878],
  ['', '國票-敦北法人', '出', -614, '24...', '30...', 5478, -285],
  ['soft', '國泰-敦南', '出作輸', -582, '30...', '31...', 61956, -1880],
  ['', '中國信託', '出', -435, '51...', '55...', 10661, 204],
  ['', '元大-沙鹿', '', -385, '10...', '14...', 2469, -853],
  ['soft', '富邦-木柵', '出輸', -347, '13...', '16...', 2987, -1033],
  ['', '富邦-建國', '', -343, '23...', '27...', 5127, -636],
  ['', '元大-松山', '', -295, '11...', '14...', 2689, -1034]]);
```
